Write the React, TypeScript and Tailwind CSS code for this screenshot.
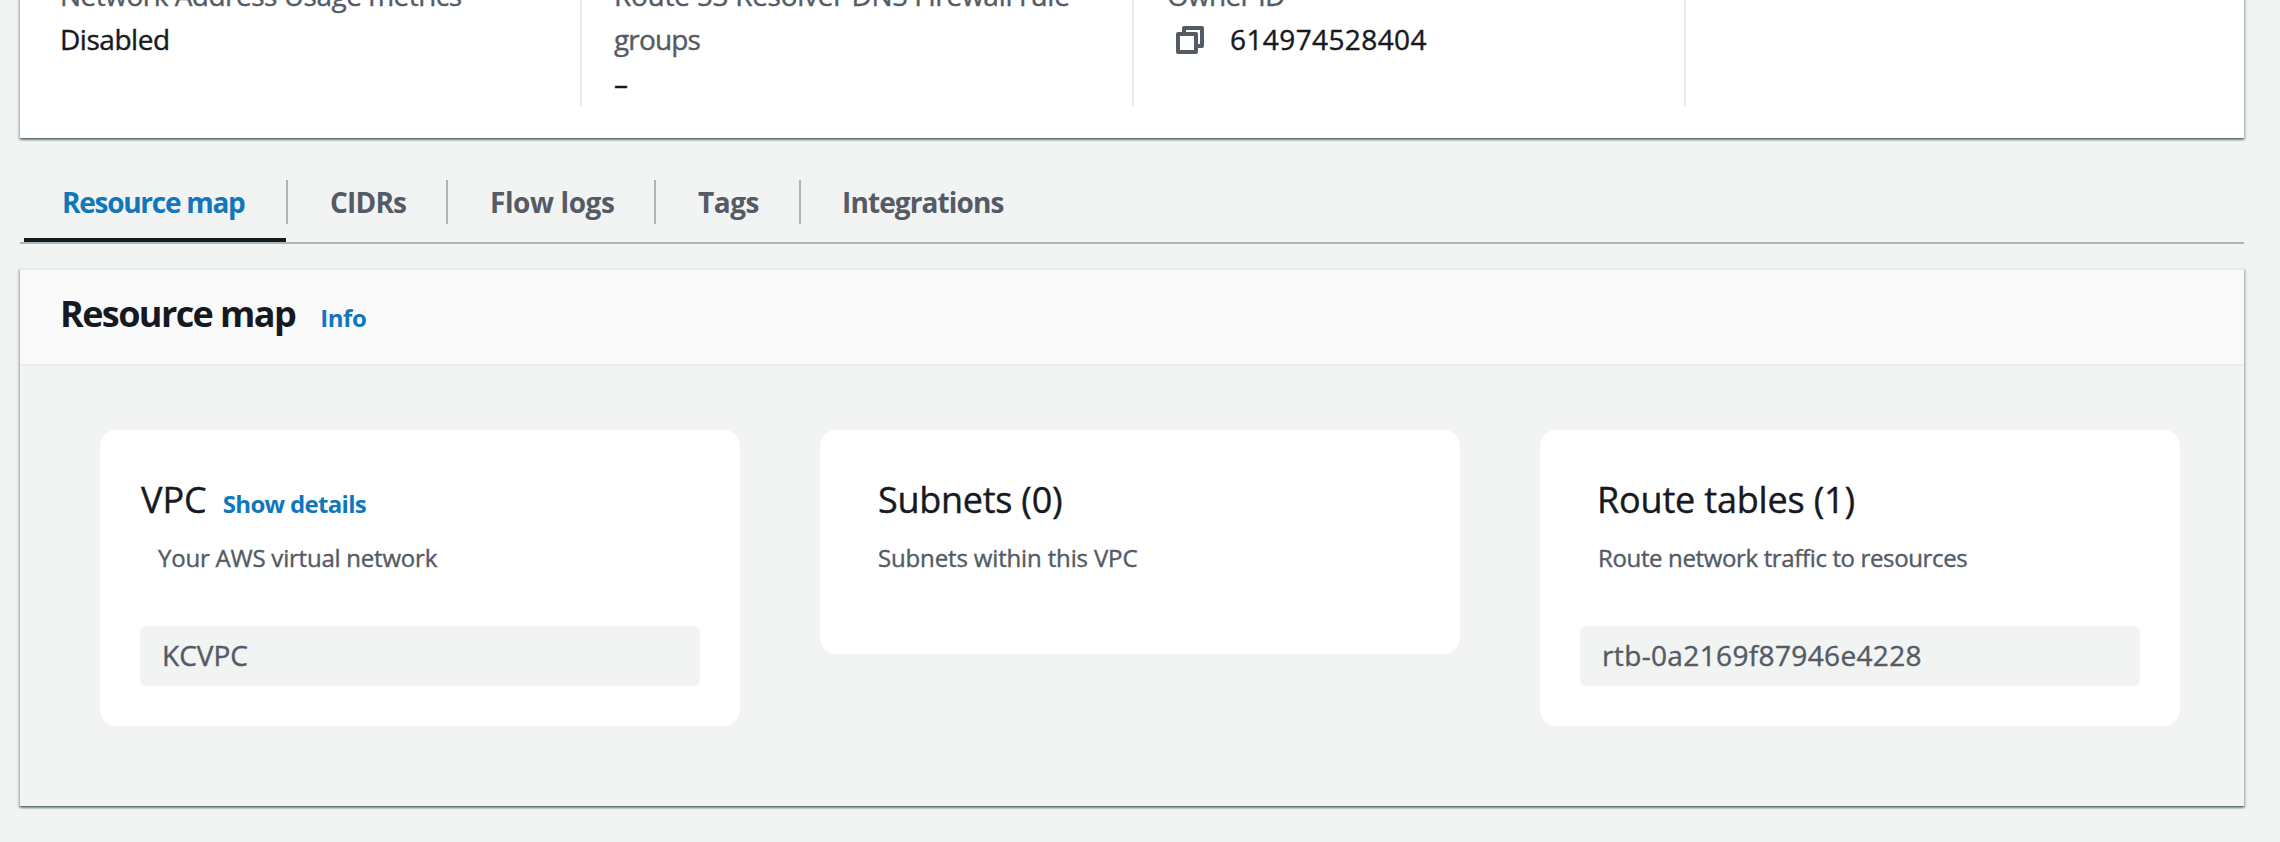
import type { ReactNode } from "react";

const PANEL_SHADOW =
  "shadow-[0_2px_2px_0_rgba(0,28,36,0.3),2px_2px_2px_0_rgba(0,28,36,0.15),-2px_2px_2px_0_rgba(0,28,36,0.15),0_1px_1px_0_rgba(0,28,36,0.25)]";

function CopyIcon() {
  return (
    <svg width="28" height="28" viewBox="0 0 28 28" fill="none" stroke="#545b64" strokeWidth="4" strokeLinejoin="round">
      <path d="M2 8h18v18H2z" />
      <path d="M8 8V2h18v18h-6" />
    </svg>
  );
}

function Detail({ children, className = "" }: { children: ReactNode; className?: string }) {
  return <div className={`h-[133px] shrink-0 whitespace-nowrap border-r-2 border-[#eaeded] ${className}`}>{children}</div>;
}

function DetailsPanel() {
  return (
    <section className={`-mt-[27px] h-[165px] bg-white ${PANEL_SHADOW}`}>
      <div className="flex text-[28px] leading-[44px] [-webkit-text-stroke:0.4px]">
        <Detail className="w-[562px] pl-10">
          <p className="tracking-[-0.51px] text-[#545b64]">Network Address Usage metrics</p>
          <p className="tracking-[-0.46px]">Disabled</p>
        </Detail>
        <Detail className="w-[552px] pl-8">
          <p className="tracking-[-0.27px] text-[#545b64]">Route 53 Resolver DNS Firewall rule</p>
          <p className="tracking-[-0.86px] text-[#545b64]">groups</p>
          <p>–</p>
        </Detail>
        <Detail className="w-[552px] pl-[33px]">
          <p className="tracking-[-0.7px] text-[#545b64]">Owner ID</p>
          <div className="flex h-11 items-center gap-[26px] pl-[9px]">
            <span className="pt-0.5"><CopyIcon /></span>
            <span className="tracking-[0.4px]">614974528404</span>
          </div>
        </Detail>
      </div>
    </section>
  );
}

function Tab({ label, className, last }: { label: string; className: string; last?: boolean }) {
  return (
    <div className={`flex h-11 items-center whitespace-nowrap border-[#aab7b8] ${last ? "" : "border-r-2"} ${className}`}>
      {label}
    </div>
  );
}

function Tabs() {
  return (
    <nav className="mt-[42px] flex h-16 border-b-2 border-[#aab7b8] text-[28px] font-bold text-[#545b64]">
      <div className="ml-1 h-[62px] w-[264px]">
        <Tab label="Resource map" className="pl-[38px] tracking-[-1.27px] text-[#1077bb]" />
        <div className="mr-0.5 mt-3.5 h-1 bg-[#16191f]" />
      </div>
      <Tab label="CIDRs" className="w-[160px] pl-[42px] tracking-[-0.82px]" />
      <Tab label="Flow logs" className="w-[208px] pl-[42px] tracking-[-0.4px]" />
      <Tab label="Tags" className="w-[145px] pl-[42px] tracking-[-0.47px]" />
      <Tab label="Integrations" className="pl-[41px] tracking-[-0.89px]" last />
    </nav>
  );
}

interface CardProps {
  title: string;
  titleClass: string;
  description: string;
  descriptionClass: string;
  item?: string;
  itemClass?: string;
  action?: string;
}

function Card({ title, titleClass, description, descriptionClass, item, itemClass = "", action }: CardProps) {
  return (
    <article className={`w-[640px] shrink-0 rounded-2xl bg-white px-10 pt-11 ${item ? "h-[296px]" : "h-[224px]"}`}>
      <div className="flex items-baseline gap-4 whitespace-nowrap">
        <h3 className={`text-[36px] leading-[52px] [-webkit-text-stroke:0.4px] ${titleClass}`}>{title}</h3>
        {action && <a className="text-[24px] font-bold tracking-[-0.69px] text-[#1077bb]">{action}</a>}
      </div>
      <p className={`mt-3 pl-[18px] text-[24px] leading-[40px] text-[#545b64] [-webkit-text-stroke:0.4px] ${descriptionClass}`}>
        {description}
      </p>
      {item && (
        <div className={`mt-12 flex h-[60px] items-center rounded-md bg-[#f2f3f3] pb-0.5 text-[28px] text-[#545b64] [-webkit-text-stroke:0.4px] ${itemClass}`}>
          {item}
        </div>
      )}
    </article>
  );
}

function ResourceMap() {
  return (
    <section className={`mt-6 h-[538px] border-t-2 border-[#eaeded] bg-[#f2f3f3] ${PANEL_SHADOW}`}>
      <header className="flex h-24 items-baseline gap-[25px] border-b-2 border-[#eaeded] bg-[#fafafa] pl-10 pt-5 font-bold">
        <h2 className="text-[36px] leading-[48px] tracking-[-1.59px]">Resource map</h2>
        <a className="text-[24px] tracking-[-0.4px] text-[#1077bb]">Info</a>
      </header>
      <div className="flex items-start gap-20 px-20 pt-16">
        <Card
          title="VPC" titleClass="pl-px" action="Show details"
          description="Your AWS virtual network" descriptionClass="tracking-[-0.22px]"
          item="KCVPC" itemClass="pl-[22px]"
        />
        <Card
          title="Subnets (0)" titleClass="pl-[18px] tracking-[-0.27px]"
          description="Subnets within this VPC" descriptionClass="tracking-[-0.15px]"
        />
        <Card
          title="Route tables (1)" titleClass="pl-[17px] tracking-[-0.18px]"
          description="Route network traffic to resources" descriptionClass="tracking-[-0.36px]"
          item="rtb-0a2169f87946e4228" itemClass="pl-[22px] tracking-[0.36px]"
        />
      </div>
    </section>
  );
}

export default function App() {
  return (
    <main className="flow-root h-[842px] w-[2280px] overflow-hidden bg-[#f2f3f3] pl-5 pr-9 font-['Open_Sans',sans-serif] text-[#16191f]">
      <DetailsPanel />
      <Tabs />
      <ResourceMap />
    </main>
  );
}
